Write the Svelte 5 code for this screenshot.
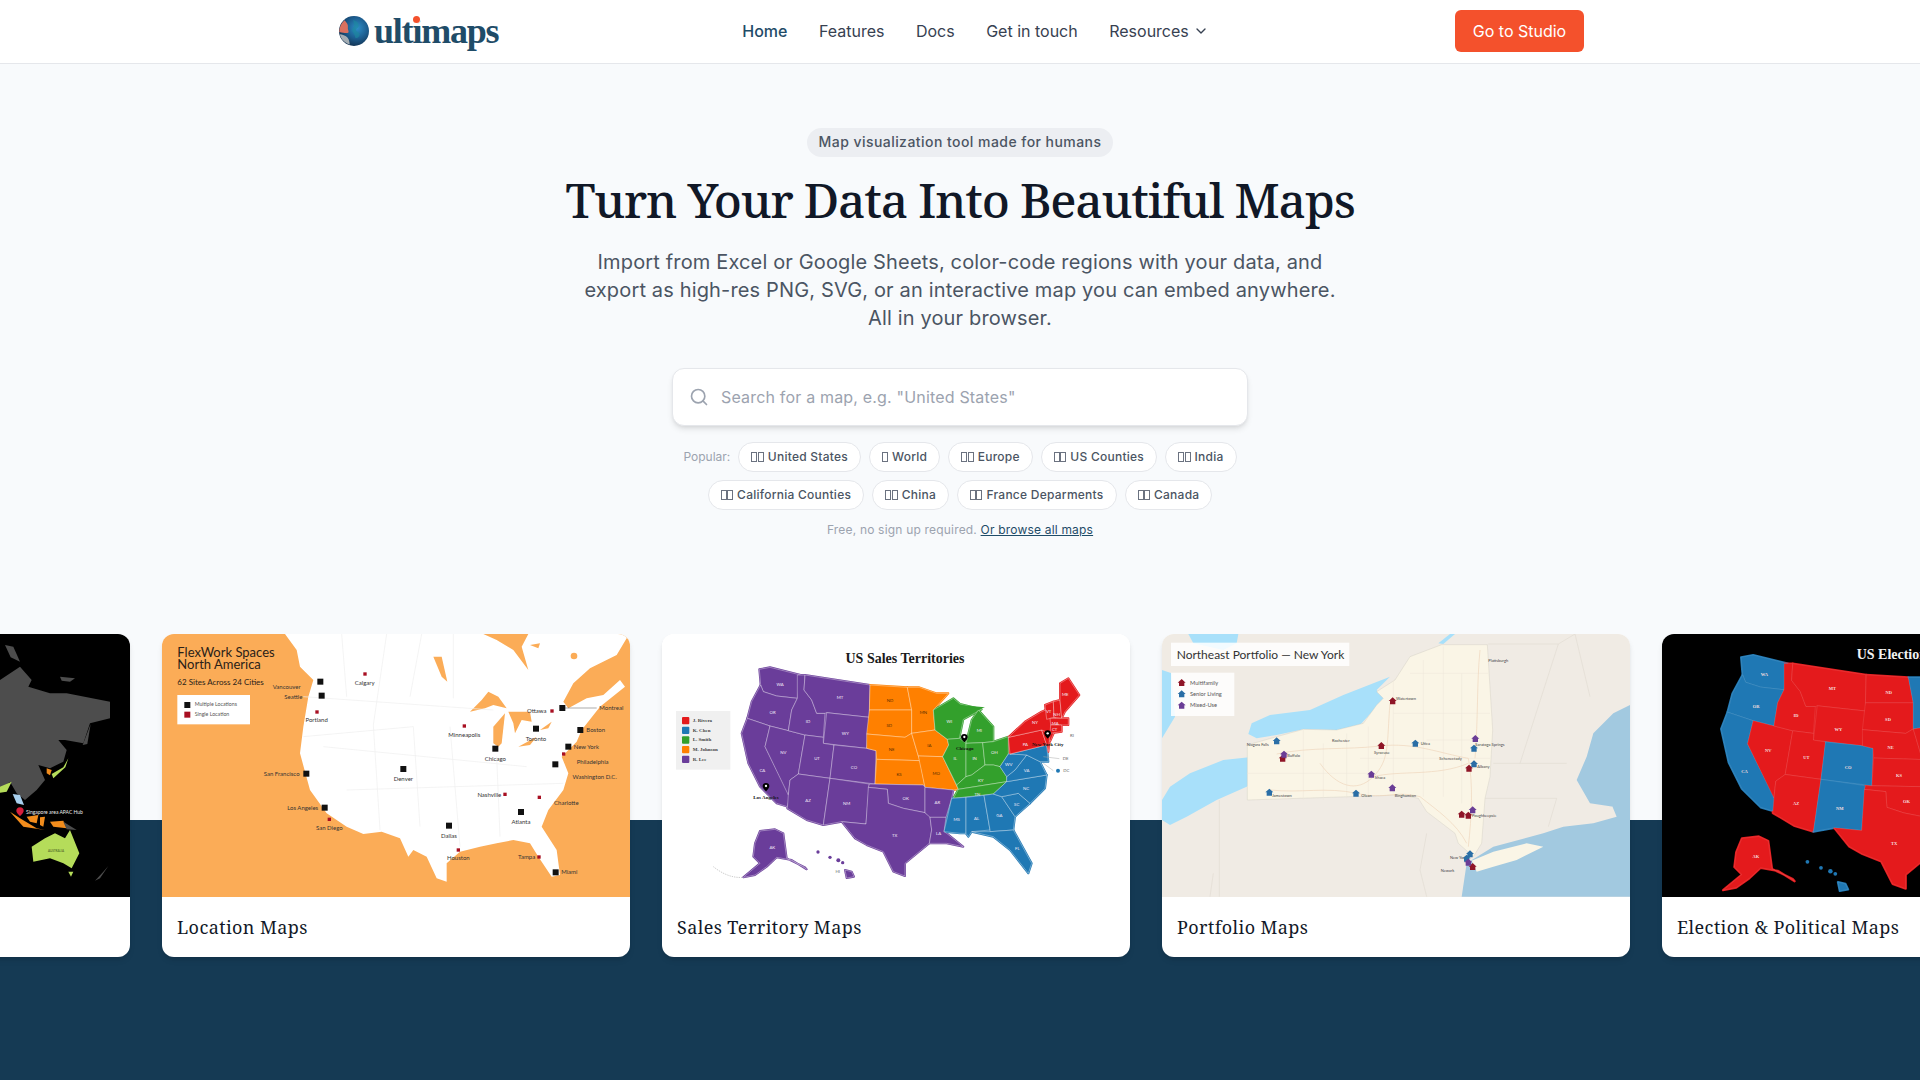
<script>
	const navLinks = ['Home', 'Features', 'Docs', 'Get in touch'];

	// the flags show up as missing-glyph boxes, so only the box count is kept
	const popular = [
		[2, 'United States'],
		[1, 'World'],
		[2, 'Europe'],
		[2, 'US Counties'],
		[2, 'India'],
		[2, 'California Counties'],
		[2, 'China'],
		[2, 'France Deparments'],
		[2, 'Canada']
	];

	const territory = {
		red: '#e41a1c',
		blue: '#1f78b4',
		green: '#33a02c',
		orange: '#ff8000',
		purple: '#6a3d9a'
	};

	// state shapes: label, owner on the sales map, label position, outline
	const states = [
		['WA', 'purple', 360, 162, '298,118 330,112 422,135 412,205 350,198 310,185 302,165'],
		['OR', 'purple', 338, 248, '302,165 310,185 350,198 412,205 395,240 385,302 330,288 262,265 275,215'],
		['CA', 'purple', 307, 422, '262,265 330,288 315,350 390,500 382,530 350,520 300,470 265,400 245,310'],
		['NV', 'purple', 370, 368, '330,288 385,302 435,315 415,432 390,450 385,495 315,350'],
		['ID', 'purple', 444, 273, '412,135 435,135 432,180 455,210 470,250 495,250 490,322 435,315 385,302 395,240 412,205'],
		['MT', 'purple', 540, 202, '435,135 630,165 628,262 500,248 495,250 470,250 455,210 432,180'],
		['WY', 'purple', 556, 310, '500,248 628,262 620,355 490,340'],
		['UT', 'purple', 471, 385, '435,315 490,322 490,340 522,345 510,445 415,432'],
		['CO', 'purple', 582, 412, '522,345 620,355 648,362 645,462 510,445'],
		['AZ', 'purple', 444, 510, '415,432 510,445 490,585 440,570 382,535 385,495 390,450'],
		['NM', 'purple', 560, 521, '510,445 628,462 618,582 545,575 490,585'],
		['ND', 'orange', 690, 212, '630,165 742,172 755,240 628,240'],
		['SD', 'orange', 688, 285, '628,240 755,240 755,310 735,322 620,312'],
		['NE', 'orange', 695, 358, '620,312 735,322 755,310 775,378 780,392 650,388 648,362 620,355'],
		['KS', 'orange', 717, 433, '650,388 780,392 795,472 790,465 645,462'],
		['MN', 'orange', 790, 247, '742,172 778,172 830,190 865,190 820,240 825,300 755,310 755,240'],
		['IA', 'orange', 808, 346, '755,310 825,300 862,328 866,345 848,380 775,378'],
		['MO', 'orange', 829, 431, '775,378 848,380 895,478 880,480 795,472'],
		['OK', 'purple', 737, 504, '628,462 790,465 795,472 795,548 730,535 685,520 682,478 625,472'],
		['TX', 'purple', 704, 615, '625,472 682,478 685,520 730,535 795,548 810,560 815,600 808,640 735,700 735,738 700,725 670,665 620,645 585,625 545,575 618,582'],
		['AR', 'purple', 832, 517, '795,472 880,480 875,505 858,562 810,562 795,548'],
		['LA', 'purple', 836, 611, '810,562 858,562 852,605 860,610 910,650 860,640 808,640 815,600'],
		['WI', 'green', 868, 275, '820,240 880,205 900,222 965,238 910,268 898,325 862,328 825,300'],
		['IL', 'green', 886, 386, '862,328 898,325 918,340 918,440 890,465 848,380 866,345'],
		['MI', 'green', 958, 300, '918,340 935,270 955,240 1000,290 1000,335 968,338'],
		['IN', 'green', 944, 384, '918,340 968,338 975,405 935,435 918,440'],
		['OH', 'green', 1003, 368, '968,338 1000,335 1045,320 1045,372 1020,410 1000,405 975,405'],
		['KY', 'green', 962, 451, '890,465 918,440 935,435 975,405 1000,405 1020,410 1040,440 1040,455 895,478'],
		['TN', 'green', 952, 492, '895,478 1040,455 1000,492 880,505'],
		['MS', 'blue', 890, 568, '875,505 918,502 918,610 900,610 852,605'],
		['AL', 'blue', 950, 564, '918,502 972,496 990,600 935,605 925,620 918,610'],
		['GA', 'blue', 1018, 556, '972,496 1000,492 1025,500 1065,560 1060,600 990,605 990,600'],
		['FL', 'blue', 1072, 654, '935,605 990,605 1060,600 1115,700 1105,730 1050,660 1000,620'],
		['SC', 'blue', 1070, 523, '1025,500 1075,490 1110,520 1065,560'],
		['NC', 'blue', 1098, 475, '1000,492 1040,455 1160,435 1155,475 1110,520 1075,490 1025,500'],
		['VA', 'blue', 1100, 421, '1040,455 1160,435 1140,395 1100,375 1065,420 1040,440'],
		['WV', 'blue', 1046, 404, '1020,410 1045,372 1075,372 1100,375 1065,420 1040,440'],
		['', 'blue', 0, 0, '1050,372 1160,345 1165,395 1140,395 1100,375'],
		['PA', 'red', 1096, 342, '1045,322 1145,300 1160,345 1050,372'],
		['NY', 'red', 1125, 278, '1045,322 1095,275 1145,245 1180,230 1190,290 1170,335 1145,300'],
		['', 'red', 0, 0, '1145,300 1170,310 1165,365 1160,345'],
		['VT', 'red', 1166, 244, '1155,225 1180,215 1182,262 1160,268'],
		['NH', 'red', 1190, 252, '1180,215 1200,210 1205,265 1182,262'],
		['ME', 'red', 1216, 194, '1200,160 1225,145 1258,195 1215,245 1205,265 1200,210'],
		['MA', 'red', 1186, 280, '1170,265 1205,265 1225,265 1225,285 1172,285'],
		['CT', 'red', 1184, 297, '1172,285 1205,285 1205,305 1170,310'],
		['AK', 'purple', 337, 652, '285,640 300,603 345,598 370,610 380,685 435,712 440,718 395,690 350,682 320,710 285,735 250,742 300,700 280,680'],
		['', 'purple', 0, 0, '555,720 575,725 582,740 560,744']
	];
	const upperMichigan = '885,240 905,226 975,232 950,240 915,250';
	const hawaiiDots = [[474, 666, 5], [510, 682, 5], [535, 691, 6], [548, 698, 5]];

	const electionBlue = ['WA', 'OR', 'CA', 'CO', 'NM', 'MN'];

	const salesLegend = [
		['J. Rivera', 'red'],
		['K. Chen', 'blue'],
		['L. Smith', 'green'],
		['M. Johnson', 'orange'],
		['R. Lee', 'purple']
	];

	const sites = [
		[481, 155, 1, 'Vancouver', 380, 170],
		[485, 197, 1, 'Seattle', 400, 201],
		[471, 246, 0, 'Portland', 470, 271],
		[615, 132, 0, 'Calgary', 614, 158],
		[913, 288, 0, 'Minneapolis', 913, 314],
		[1006, 356, 1, 'Chicago', 1006, 386],
		[730, 417, 1, 'Denver', 730, 447],
		[439, 431, 1, 'San Francisco', 365, 432],
		[494, 533, 1, 'Los Angeles', 428, 534],
		[508, 568, 0, 'San Diego', 508, 593],
		[867, 587, 1, 'Dallas', 867, 617],
		[895, 660, 0, 'Houston', 895, 685],
		[1035, 493, 0, 'Nashville', 988, 494],
		[1083, 546, 1, 'Atlanta', 1083, 576],
		[1138, 502, 0, 'Charlotte', 1219, 520],
		[1137, 681, 0, 'Tampa', 1100, 682],
		[1187, 727, 1, 'Miami', 1228, 727],
		[1176, 243, 0, 'Ottawa', 1130, 244],
		[1207, 234, 1, 'Montreal', 1354, 235],
		[1128, 296, 1, 'Toronto', 1128, 326],
		[1261, 300, 1, 'Boston', 1307, 301],
		[1225, 350, 1, 'New York', 1279, 350],
		[1211, 372, 0, 'Philadelphia', 1298, 396],
		[1186, 403, 1, 'Washington D.C.', 1304, 441]
	];

	const houseColors = { m: '#8f1527', s: '#2a6ea6', x: '#6a3d96' };
	const houses = [
		[65, 158, 'm'], [65, 192, 's'], [65, 226, 'x'],
		[698, 213, 'm'], [664, 347, 'm'], [368, 385, 'm'], [927, 415, 'm'], [905, 553, 'm'], [925, 556, 'm'], [938, 710, 'm'],
		[350, 333, 's'], [766, 340, 's'], [942, 355, 's'], [942, 402, 's'], [328, 487, 's'], [588, 490, 's'], [930, 672, 's'], [920, 685, 's'],
		[372, 373, 'x'], [634, 433, 'x'], [697, 474, 'x'], [946, 326, 'x'], [938, 540, 'x'], [925, 697, 'x']
	];
	const towns = [
		['Plattsburgh', 985, 92], ['Watertown', 708, 206], ['Rochester', 516, 331], ['Niagara Falls', 260, 343],
		['Buffalo', 382, 377], ['Syracuse', 642, 367], ['Utica', 782, 342], ['Saratoga Springs', 946, 345],
		['Schenectady', 838, 386], ['Albany', 952, 410], ['Ithaca', 644, 443], ['Binghamton', 704, 496],
		['Olean', 604, 496], ['Jamestown', 336, 496], ['Poughkeepsie', 936, 556], ['New York', 870, 684], ['Newark', 842, 722]
	];
	const roads = [
		'M350 372 C450 350 560 360 660 348 S840 370 925 385',
		'M480 400 C530 470 590 490 640 440 S680 340 690 220',
		'M925 385 C940 460 935 560 925 650',
		'M640 440 C720 420 830 440 925 400',
		'M330 480 C420 490 500 470 590 490 S700 480 780 500',
		'M780 500 C830 540 890 580 920 640',
		'M960 60 C950 160 955 260 945 385'
	];
	const countyLines = [
		'M430 298 V510', 'M490 340 V510', 'M560 310 V505', 'M625 290 V500', 'M700 150 V490', 'M790 90 V500',
		'M850 50 V500', 'M905 130 V520', 'M262 430 H620', 'M600 385 H990', 'M700 250 H990', 'M750 130 H985', 'M800 330 H950'
	];
</script>

<header class="nav">
	<div class="nav-inner">
		<a class="logo" href="/">
			<svg class="globe" viewBox="0 0 32 32" aria-hidden="true">
				<defs>
					<radialGradient id="ocean" cx="0.6" cy="0.4" r="0.65">
						<stop offset="0" stop-color="#2f8fc9" />
						<stop offset="0.55" stop-color="#1c5c8e" />
						<stop offset="1" stop-color="#122f4d" />
					</radialGradient>
				</defs>
				<circle cx="16" cy="16" r="16" fill="url(#ocean)" />
				<path d="M6 4.500C8 7 10 9 9.500 12s1.500 4 .5 5.500-5 .5-9.700-.5C.4 12 2 8 6 4.500Z" fill="#d9705f" />
				<path d="M.8 19.500c3 0 6 1.500 7.700 3s2.500 4 3 8C6.500 29 2 25 .8 19.500Z" fill="#a4adb3" />
				<path d="M15 4c3 1 6 3 6 6s-3 3-3 5 4 2 4 5-3 4-5 3c1-3-3-5-3-8s3-3 2-6 0-3-1-5Z" fill="#1d8a9c" opacity="0.6" />
			</svg>
			<span class="wordmark">ultimaps<i class="dot"></i></span>
		</a>
		<nav class="links">
			{#each navLinks as link, i}
				<a href="/" class:active={i === 0}>{link}</a>
			{/each}
			<button class="resources">
				Resources
				<svg width="16" height="16" viewBox="0 0 24 24" fill="none" stroke="currentColor" stroke-width="2" stroke-linecap="round" stroke-linejoin="round"><path d="m6 9 6 6 6-6" /></svg>
			</button>
		</nav>
		<a class="studio" href="/">Go to Studio</a>
	</div>
</header>

<section class="hero">
	<span class="badge">Map visualization tool made for humans</span>
	<h1>Turn Your Data Into Beautiful Maps</h1>
	<p class="lead">
		Import from Excel or Google Sheets, color-code regions with your data, and<br />
		export as high-res PNG, SVG, or an interactive map you can embed anywhere.<br />
		All in your browser.
	</p>
	<div class="search">
		<svg width="20" height="20" viewBox="0 0 24 24" fill="none" stroke="#9ca3af" stroke-width="2" stroke-linecap="round"><circle cx="11" cy="11" r="8" /><path d="m21 21-4.300-4.300" /></svg>
		<span>Search for a map, e.g. "United States"</span>
	</div>
	<div class="chips">
		<span class="popular">Popular:</span>
		{#each popular as [boxes, name]}
			<a class="chip" href="/">
				<span class="flag">
					{#each { length: boxes } as _}<i></i>{/each}
				</span>
				{name}
			</a>
		{/each}
	</div>
	<p class="note">Free, no sign up required. <a href="/">Or browse all maps</a></p>
</section>

<section class="showcase">
	<div class="track">
		<article class="card">
			<svg class="art" viewBox="-1014 12 1404 789">
				<rect x="-1014" y="12" width="1404" height="789" fill="#000" />
				<polygon fill="#4d4d4d" points="-1014,150 0,150 60,110 95,150 85,170 150,190 200,190 330,215 330,265 270,280 250,340 195,330 175,330 200,360 190,395 150,415 115,405 135,450 110,480 75,510 50,490 30,455 0,480 -1014,480" />
				<polygon fill="#4d4d4d" points="15,45 40,50 60,95 32,82" />
				<polygon fill="#4d4d4d" points="180,140 225,145 210,155 185,152" />
				<polygon fill="#4d4d4d" points="248,345 272,282 262,342" />
				<polygon fill="#4d4d4d" points="285,752 310,725 325,708 300,745" />
				<polygon fill="#b5dc5a" points="155,432 190,412 205,385 196,412 160,445" />
				<polygon fill="#f28c1c" points="140,415 155,420 150,436 140,430" />
				<polygon fill="#a8d0ee" points="38,492 60,495 72,525 50,520" />
				<polygon fill="#b5dc5a" points="0,470 35,455 20,485 0,488" />
				<polygon fill="#f28c1c" points="30,545 60,565 110,595 135,600 70,590" />
				<polygon fill="#f28c1c" points="80,560 115,555 110,580 90,575" />
				<polygon fill="#f28c1c" points="120,562 135,560 130,590 120,585" />
				<polygon fill="#f28c1c" points="150,575 190,572 200,595 160,590" />
				<polygon fill="#4d4d4d" points="190,575 230,600 200,598" />
				<polygon fill="#b5dc5a" points="95,650 135,625 165,610 195,625 210,600 238,670 215,715 190,700 150,685 100,695" />
				<polygon fill="#b5dc5a" points="205,725 220,725 213,740" />
				<path d="M60 532c-7 0-11 5-11 10 0 7 11 16 11 16s11-9 11-16c0-5-4-10-11-10Z" fill="#d81f3c" />
				<text class="sans" x="78" y="552" font-size="15" fill="#eee">Singapore area APAC Hub</text>
				<text class="sans" x="168" y="665" font-size="9" text-anchor="middle" fill="#3c5220">AUSTRALIA</text>
			</svg>
			<h3>Territory Maps</h3>
		</article>

		<article class="card">
			<svg class="art" viewBox="6 12 1404 789">
				<rect x="6" y="12" width="1404" height="789" fill="#fbac57" />
				<polygon fill="#fff" points="375,12 410,60 420,110 460,150 445,200 430,290 420,370 450,480 500,550 560,590 610,612 665,605 720,625 745,680 760,660 800,680 830,745 860,755 860,700 900,665 960,650 1010,640 1060,630 1110,640 1135,680 1175,740 1200,735 1190,660 1145,590 1165,540 1210,480 1225,430 1205,380 1250,335 1265,300 1320,230 1395,170 1380,150 1330,195 1280,205 1225,235 1210,215 1240,160 1290,115 1370,75 1400,25 1400,12" />
				<g fill="#fbac57">
					<polygon points="970,12 1105,12 1085,50 1105,120 1060,60 1010,30" />
					<polygon points="820,80 845,80 862,155 845,140" />
					<polygon points="930,245 965,210 985,185 1015,200 1040,235 1000,225 975,235" />
					<polygon points="1000,290 1035,250 1025,340 1015,350 1000,340" />
					<polygon points="1045,245 1110,245 1115,275 1085,270 1065,310 1060,280" />
					<polygon points="1075,350 1130,320 1110,345" />
					<polygon points="1140,300 1175,275 1165,295" />
					<circle cx="1242" cy="78" r="10" />
					<polygon points="1110,45 1140,40 1135,55" />
				</g>
				<g fill="none" stroke="#efefef" stroke-width="2">
					<path d="M430 200 L1000 240" />
					<path d="M545 12 560 200M680 12 640 285M785 12 750 200M880 12 880 205" />
					<path d="M430 320 760 290M490 350 1100 410M560 480 1210 460M640 285 660 600M760 290 780 590M870 290 900 650M1010 380 1020 620" />
				</g>
				<path d="M1215 234H1310" stroke="#555" stroke-width="1.500" />
				{#each sites as [x, y, multi, name, lx, ly]}
					{#if multi}
						<rect x={x - 9} y={y - 9} width="18" height="18" fill="#111" />
					{:else}
						<rect x={x - 5} y={y - 5} width="10" height="10" fill="#a80f22" />
					{/if}
					<text class="sans" x={lx} y={ly + 6} font-size="18" text-anchor="middle" fill="#333">{name}</text>
				{/each}
				<text class="sans" x="52" y="80" font-size="39" fill="#2a2118">FlexWork Spaces</text>
				<text class="sans" x="52" y="118" font-size="39" fill="#2a2118">North America</text>
				<text class="sans" x="52" y="166" font-size="24" fill="#2a2118">62 Sites Across 24 Cities</text>
				<rect x="52" y="195" width="218" height="88" fill="#fff" />
				<rect x="73" y="216" width="18" height="18" fill="#111" />
				<rect x="73" y="245" width="18" height="18" fill="#a80f22" />
				<text class="sans" x="104" y="229" font-size="15.700" fill="#555">Multiple Locations</text>
				<text class="sans" x="104" y="258" font-size="15.700" fill="#555">Single Location</text>
			</svg>
			<h3>Location Maps</h3>
		</article>

		<article class="card">
			<svg class="art" viewBox="6 12 1404 789">
				<rect x="6" y="12" width="1404" height="789" fill="#fff" />
				<text class="serif" x="735" y="99" font-size="42" font-weight="700" text-anchor="middle" fill="#1a1a1a">US Sales Territories</text>
				<rect x="48" y="243" width="163" height="176" fill="#f0f0f0" />
				{#each salesLegend as [name, owner], i}
					<rect x="66" y={261 + i * 29} width="22" height="22" rx="3" fill={territory[owner]} />
					<text class="serif" x="98" y={276 + i * 29} font-size="15" font-weight="700" fill="#444">{name}</text>
				{/each}
				<!-- wide strokes first so no paper shows between the rough state edges -->
				{#each states as [, owner, , , pts]}
					<polygon points={pts} fill={territory[owner]} stroke={territory[owner]} stroke-width="6" stroke-linejoin="round" />
				{/each}
				{#each states as [label, owner, lx, ly, pts]}
					<polygon points={pts} fill={territory[owner]} stroke="#fff" stroke-width="1.500" stroke-opacity="0.7" />
					{#if label}
						<text class="sans" x={lx} y={ly + 5} font-size="13" text-anchor="middle" fill={owner === 'orange' ? '#5a2d00' : '#f2eaf8'}>{label}</text>
					{/if}
				{/each}
				<polygon points={upperMichigan} fill={territory.green} />
				{#each hawaiiDots as [x, y, r]}
					<circle cx={x} cy={y} r={r} fill="#6a3d9a" />
				{/each}
				<path d="M160 710C185 730 215 745 250 742" fill="none" stroke="#999" stroke-width="1.500" stroke-dasharray="4 3" />
				<text class="sans" x="533" y="729" font-size="13" text-anchor="middle" fill="#666">HI</text>
				<path d="M1150 380 1198 386M1150 400 1180 422" stroke="#aaa" stroke-width="1.500" />
				<circle cx="1194" cy="422" r="6" fill="#1f78b4" />
				<text class="sans" x="1217" y="391" font-size="13" text-anchor="middle" fill="#666">DE</text>
				<text class="sans" x="1219" y="427" font-size="13" text-anchor="middle" fill="#666">DC</text>
				<text class="sans" x="1236" y="320" font-size="13" text-anchor="middle" fill="#666">RI</text>
				{#each [[318, 470], [913, 323], [1163, 312]] as [x, y]}
					<path d={`M${x} ${y - 11}c-6 0-10 4-10 9 0 7 10 16 10 16s10-9 10-16c0-5-4-9-10-9Z`} fill="#000" />
					<circle cx={x} cy={y - 2} r="3.500" fill="#fff" />
				{/each}
				<text class="serif" x="318" y="507" font-size="15" font-weight="700" text-anchor="middle" fill="#111">Los Angeles</text>
				<text class="serif" x="914" y="359" font-size="15" font-weight="700" text-anchor="middle" fill="#111">Chicago</text>
				<text class="serif" x="1163" y="348" font-size="15" font-weight="700" text-anchor="middle" fill="#111">New York City</text>
			</svg>
			<h3>Sales Territory Maps</h3>
		</article>

		<article class="card">
			<svg class="art" viewBox="6 12 1404 789">
				<rect x="6" y="12" width="1404" height="789" fill="#f0ebe4" />
				<g fill="#a8e0fa">
					<polygon points="85,12 235,12 230,40 190,60 100,40" />
					<polygon points="6,120 35,130 45,260 6,325" />
					<polygon points="265,312 275,280 330,255 450,240 550,195 640,160 690,140 650,180 670,205 650,230 600,285 530,300 430,298 350,315 290,325" />
					<polygon points="6,510 30,470 90,430 190,390 330,375 355,395 260,470 170,510 80,560 30,585 6,570" />
					<polygon points="835,40 870,12 885,12 850,42" />
				</g>
				<polygon fill="#a2c9e0" points="1410,225 1360,250 1300,310 1280,380 1250,450 1290,520 1360,530 1385,545 1350,500 1345,500 1370,560 1300,580 1210,590 1150,610 1000,650 920,700 905,800 1410,800" />
				<polygon fill="#faf5e6" stroke="#c8c4ba" stroke-width="1" points="262,510 262,345 350,320 430,298 530,300 610,280 650,225 670,205 650,185 705,150 750,80 845,44 982,44 998,300 990,440 975,505 965,640 940,680 895,640 885,610 800,545 775,505 725,495" />
				<polygon fill="#faf5e6" points="935,692 1000,665 1100,640 1150,650 1070,690 1000,710 950,725" />
				<g fill="none" stroke="#ddd7cc" stroke-width="1.500">
					<path d="M178 510V800M985 42H1195M1195 42 1245 12M1245 12 1290 200M1195 42 1080 400M1000 400H1220M975 505H1190M1190 505 1165 590M800 610 780 720 800 800M160 730 150 800" />
				</g>
				<g fill="none" stroke="#ece7da" stroke-width="1.500">
					{#each countyLines as d}
						<path {d} />
					{/each}
				</g>
				<g fill="none" stroke="#efd5bb" stroke-width="2">
					{#each roads as d}
						<path {d} />
					{/each}
				</g>
				<rect x="33" y="38" width="535" height="70" fill="#fff" opacity="0.85" />
				<text class="sans" x="50" y="86" font-size="36" fill="#333">Northeast Portfolio — New York</text>
				<rect x="33" y="128" width="190" height="130" fill="#fff" opacity="0.85" />
				<text class="sans" x="90" y="164" font-size="17" fill="#555">Multifamily</text>
				<text class="sans" x="90" y="197" font-size="17" fill="#555">Senior Living</text>
				<text class="sans" x="90" y="231" font-size="17" fill="#555">Mixed-Use</text>
				{#each towns as [name, x, y]}
					<text class="sans" x={x} y={y + 4} font-size="12" fill="#444">{name}</text>
				{/each}
				{#each houses as [x, y, kind]}
					<polygon points={`${x},${y - 11} ${x + 12},${y} ${x + 8},${y} ${x + 8},${y + 10} ${x - 8},${y + 10} ${x - 8},${y} ${x - 12},${y}`} fill={houseColors[kind]} />
				{/each}
			</svg>
			<h3>Portfolio Maps</h3>
		</article>

		<article class="card">
			<svg class="art" viewBox="36 12 1404 789">
				<rect x="36" y="12" width="1404" height="789" fill="#000" />
				<text class="serif" x="620" y="86" font-size="42" font-weight="700" fill="#f2f2f2">US Election Results</text>
				<g transform="translate(270 75) scale(1.13 1.12) translate(-295 -112)">
					{#each states as [label, , , , pts], i}
						<polygon points={pts} fill={electionBlue.includes(label) || i === states.length - 1 ? '#1f78b4' : '#e41a1c'} stroke={electionBlue.includes(label) || i === states.length - 1 ? '#1f78b4' : '#e41a1c'} stroke-width="6" stroke-linejoin="round" />
					{/each}
					{#each states as [label, , lx, ly, pts], i}
						<polygon points={pts} fill={electionBlue.includes(label) || i === states.length - 1 ? '#1f78b4' : '#e41a1c'} stroke="#fff" stroke-width="0.800" stroke-opacity="0.35" />
						{#if label}
							<text class="serif" x={lx} y={ly + 5} font-size="12" font-weight="700" text-anchor="middle" fill="#f4dede">{label}</text>
						{/if}
					{/each}
					{#each hawaiiDots as [x, y, r]}
						<circle cx={x} cy={y} r={r} fill="#1f78b4" />
					{/each}
				</g>
			</svg>
			<h3>Election &amp; Political Maps</h3>
		</article>
	</div>
</section>

<style>
	:global(body) {
		margin: 0;
		background: #f8fafc;
		font-family: Inter, 'Noto Sans', sans-serif;
		overflow: hidden;
	}

	a {
		text-decoration: none;
		color: inherit;
	}

	.nav {
		background: #fff;
		border-bottom: 1px solid #e5e7eb;
		padding-bottom: 1px;
	}

	.nav-inner {
		width: 1248px;
		height: 62px;
		margin: 0 auto;
		display: flex;
		align-items: center;
		justify-content: space-between;
	}

	.logo {
		display: flex;
		align-items: center;
		gap: 5px;
		width: 160px;
		padding-left: 3px;
		box-sizing: border-box;
	}

	.globe {
		width: 30px;
		height: 30px;
		flex: none;
	}

	.wordmark {
		position: relative;
		font-family: 'Liberation Serif', serif;
		font-weight: 700;
		font-size: 36px;
		line-height: 40px;
		letter-spacing: -1.2px;
		color: #1f4c68;
	}

	.dot {
		position: absolute;
		left: 39px;
		top: 5px;
		width: 7px;
		height: 7px;
		border-radius: 50%;
		background: #f4512c;
		box-shadow: 0 0 0 1px #fff;
	}

	.links {
		display: flex;
		align-items: center;
		gap: 31.5px;
		font-size: 16px;
		font-weight: 400;
		color: #374151;
	}

	.active {
		color: #1f4c68;
		font-weight: 500;
	}

	.resources {
		display: flex;
		align-items: center;
		gap: 4px;
		padding: 0;
		border: 0;
		background: none;
		color: inherit;
		font: inherit;
	}

	.studio {
		display: flex;
		align-items: center;
		justify-content: center;
		width: 129px;
		height: 42px;
		border-radius: 6px;
		background: #f4512c;
		color: #fff;
		font-size: 16px;
	}

	.hero {
		display: flex;
		flex-direction: column;
		align-items: center;
		height: 570px;
		padding-top: 64px;
		box-sizing: border-box;
	}

	.badge {
		height: 29px;
		line-height: 28px;
		padding: 0 12px;
		border-radius: 999px;
		background: #eceef2;
		color: #4b5563;
		font-size: 14px;
		font-weight: 500;
		letter-spacing: 0.45px;
	}

	h1 {
		margin: 14px 0 0;
		font-family: 'Noto Serif', 'DejaVu Serif', serif;
		font-size: 48px;
		line-height: 58px;
		font-weight: 500;
		letter-spacing: -1.2px;
		color: #111827;
	}

	.lead {
		margin: 19px 0 0;
		text-align: center;
		font-size: 20px;
		line-height: 28px;
		letter-spacing: 0.15px;
		color: #4b5563;
	}

	.search {
		display: flex;
		align-items: center;
		gap: 12px;
		width: 576px;
		height: 58px;
		margin-top: 36px;
		padding: 0 16px;
		box-sizing: border-box;
		background: #fff;
		border: 1px solid #e5e7eb;
		border-radius: 12px;
		box-shadow: 0 4px 6px -1px rgb(0 0 0 / 0.1), 0 2px 4px -2px rgb(0 0 0 / 0.1);
		color: #9ca3af;
		font-size: 16px;
		letter-spacing: 0.18px;
	}

	.chips {
		display: flex;
		flex-wrap: wrap;
		justify-content: center;
		align-items: center;
		gap: 8px;
		width: 576px;
		margin-top: 16px;
		font-size: 12px;
	}

	.popular {
		color: #9ca3af;
		padding-bottom: 1px;
	}

	.chip {
		display: flex;
		align-items: center;
		gap: 4px;
		height: 30px;
		padding: 0 12px 1px;
		box-sizing: border-box;
		background: #fff;
		border: 1px solid #e5e7eb;
		border-radius: 999px;
		color: #4b5563;
		font-weight: 500;
		letter-spacing: 0.25px;
		white-space: nowrap;
	}

	.flag {
		display: flex;
		gap: 0.5px;
	}

	.flag i {
		width: 6px;
		height: 10px;
		box-sizing: border-box;
		border: 1px solid #6b7280;
	}

	.note {
		margin: 12px 0 0;
		font-size: 12px;
		line-height: 16px;
		color: #9ca3af;
		letter-spacing: 0.19px;
	}

	.note a {
		color: #1f4c68;
		text-decoration: underline;
	}

	.showcase {
		height: 446px;
		background: linear-gradient(#f8fafc 186px, #153a54 186px);
		overflow: hidden;
	}

	.track {
		display: flex;
		gap: 32px;
		width: max-content;
		transform: translateX(-338px);
	}

	.card {
		width: 468px;
		height: 323px;
		background: #fff;
		border-radius: 12px;
		overflow: hidden;
		box-shadow: 0 4px 6px -1px rgb(0 0 0 / 0.1), 0 2px 4px -2px rgb(0 0 0 / 0.1);
	}

	.art {
		display: block;
		width: 468px;
		height: 263px;
	}

	.sans {
		font-family: Lato, sans-serif;
	}

	.serif {
		font-family: 'Liberation Serif', serif;
	}

	h3 {
		margin: 0;
		padding: 0 15px;
		font-family: 'Noto Serif', 'DejaVu Serif', serif;
		font-size: 18px;
		line-height: 60px;
		font-weight: 400;
		letter-spacing: 0.4px;
		color: #111827;
		white-space: nowrap;
	}
</style>
